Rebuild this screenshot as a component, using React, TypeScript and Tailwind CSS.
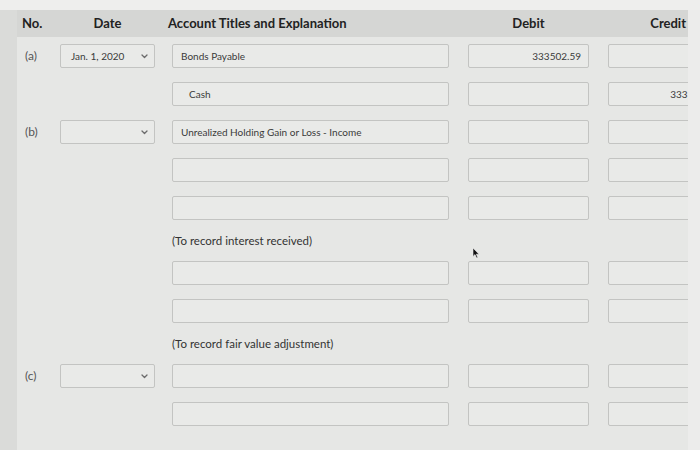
import React from 'react';

type Line = {
  no?: string;
  date?: string | null; // undefined = no select, '' = empty select
  account?: string;
  indent?: boolean;
  debit?: string;
  credit?: string;
};

type Item = { kind: 'line'; line: Line } | { kind: 'note'; text: string };

const items: Item[] = [
  { kind: 'line', line: { no: '(a)', date: 'Jan. 1, 2020', account: 'Bonds Payable', debit: '333502.59' } },
  { kind: 'line', line: { account: 'Cash', indent: true, credit: '333502.59' } },
  { kind: 'line', line: { no: '(b)', date: '', account: 'Unrealized Holding Gain or Loss - Income' } },
  { kind: 'line', line: {} },
  { kind: 'line', line: {} },
  { kind: 'note', text: '(To record interest received)' },
  { kind: 'line', line: {} },
  { kind: 'line', line: {} },
  { kind: 'note', text: '(To record fair value adjustment)' },
  { kind: 'line', line: { no: '(c)', date: '' } },
  { kind: 'line', line: {} },
];

const box =
  'h-[24px] shrink-0 border border-[#c3c4c2] bg-[#e9eae8] rounded-[2px] flex items-center text-[10px] text-[#3a3a3a] whitespace-nowrap';

function Chevron() {
  return (
    <svg width="7" height="5" viewBox="0 0 7 5" className="shrink-0">
      <path d="M1 1 L3.5 3.5 L6 1" fill="none" stroke="#6b6b6b" strokeWidth="1.3" strokeLinecap="round" strokeLinejoin="round" />
    </svg>
  );
}

function EntryRow({ line }: { line: Line }) {
  const hasSelect = line.date !== undefined;
  return (
    <div className="flex items-center h-[24px]">
      <div className="w-[43px] shrink-0 pl-[8px] text-[12px] text-[#555]">{line.no}</div>
      <div className="w-[95px] shrink-0">
        {hasSelect && (
          <div className={`${box} w-[95px] justify-between pl-[10px] pr-[6px]`}>
            <span>{line.date}</span>
            <Chevron />
          </div>
        )}
      </div>
      <div className="w-[17px] shrink-0" />
      <div className={`${box} w-[277px] ${line.indent ? 'pl-[16px]' : 'pl-[8px]'}`}>{line.account}</div>
      <div className="w-[19px] shrink-0" />
      <div className={`${box} w-[121px] justify-end pr-[7px]`}>{line.debit}</div>
      <div className="w-[19px] shrink-0" />
      <div className={`${box} w-[120px] justify-end pr-[8px]`}>{line.credit}</div>
    </div>
  );
}

export default function App() {
  return (
    <div className="w-[700px] h-[450px] overflow-hidden bg-[#ebebea] font-['Lato',sans-serif] relative">
      <div className="h-[10px] bg-[#eeeeed]" />
      <div className="flex h-[440px]">
        <div className="w-[17px] shrink-0 bg-[#dadbd9]" />
        <div className="w-[671px] shrink-0 overflow-hidden bg-[#e6e7e5]">
          {/* Header */}
          <div className="h-[27px] bg-[#d5d6d4] flex items-center text-[13px] font-bold text-[#222]">
            <div className="w-[43px] shrink-0 pl-[5px]">No.</div>
            <div className="w-[95px] shrink-0 text-center">Date</div>
            <div className="w-[13px] shrink-0" />
            <div className="w-[300px] shrink-0">Account Titles and Explanation</div>
            <div className="w-[121px] shrink-0 text-center">Debit</div>
            <div className="flex-1 text-right pr-[2px]">Credit</div>
          </div>

          <div className="flex flex-col gap-[14px] pt-[7px]">
            {items.map((it, i) =>
              it.kind === 'line' ? (
                <EntryRow key={i} line={it.line} />
              ) : (
                <div key={i} className="h-[13px] flex items-center pl-[155px] text-[11.5px] text-[#333]">
                  {it.text}
                </div>
              )
            )}
          </div>
        </div>
        <div className="flex-1 bg-[#ececeb]" />
      </div>

      {/* mouse pointer */}
      <svg className="absolute left-[472px] top-[247px]" width="8" height="12" viewBox="0 0 8 12">
        <path d="M1 1 L1 9.5 L3 7.6 L4.6 11 L5.8 10.4 L4.3 7.2 L7 7.2 Z" fill="#111" stroke="#eee" strokeWidth="0.6" />
      </svg>
    </div>
  );
}
